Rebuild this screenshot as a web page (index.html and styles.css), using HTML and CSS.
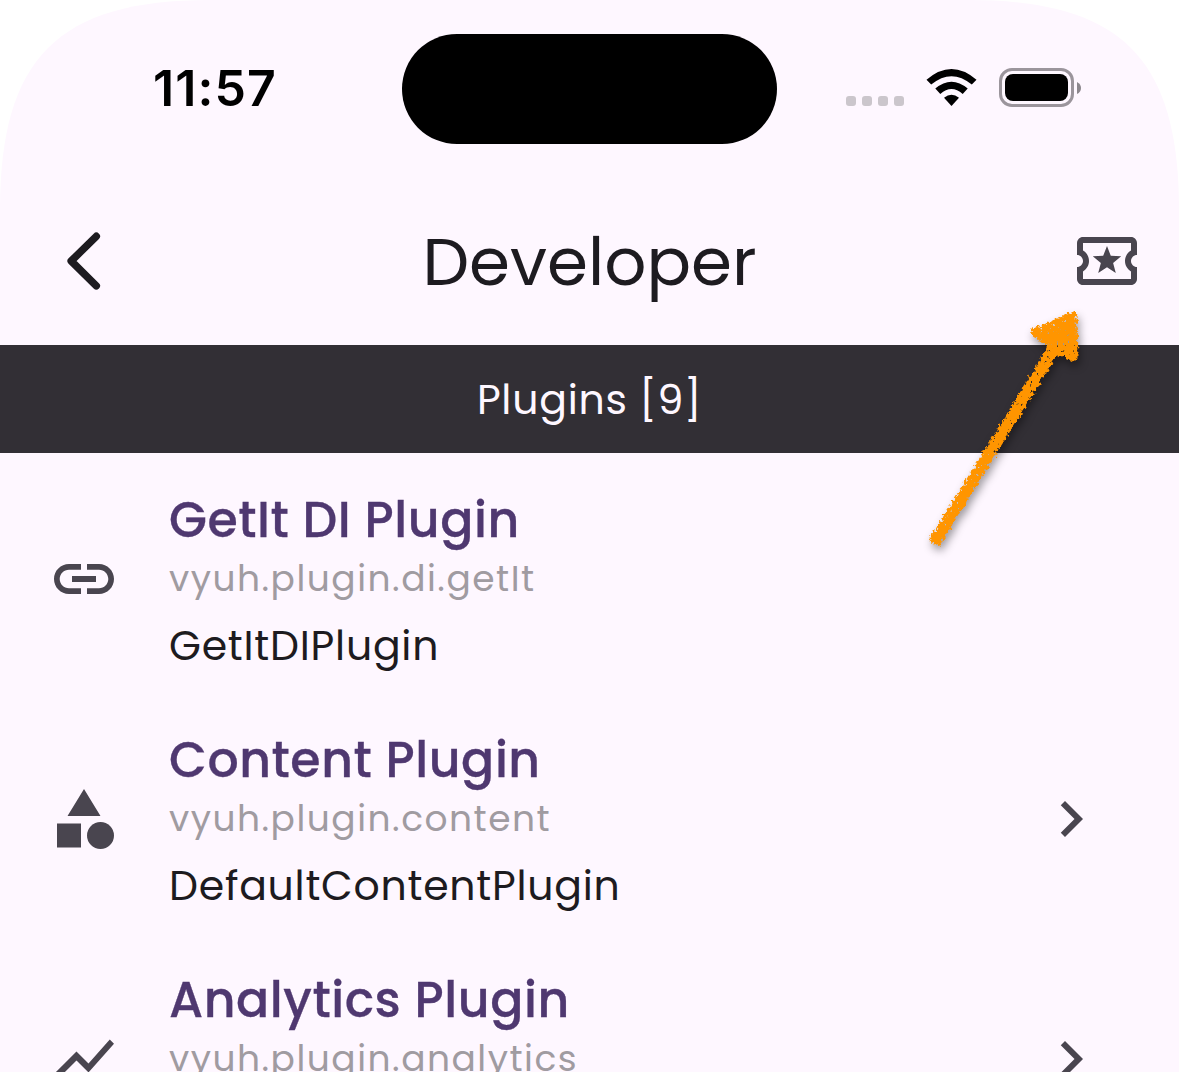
FILE: index.html
```
<!DOCTYPE html>
<html lang="en">
<head>
<meta charset="utf-8">
<title>Developer</title>
<link rel="stylesheet" href="styles.css">
</head>
<body>
<div class="screen">
  <header class="status-bar">
    <div class="status-left"><span class="time">11:57</span></div>
    <div class="island"></div>
    <div class="status-right">
      <div class="cell"><i></i><i></i><i></i><i></i></div>
      <svg class="wifi" viewBox="0 0 50 37">
        <path d="M0 10.8Q25 -10.8 50 10.8L45.3 15.6Q25 -1.2 4.7 15.6Z"/>
        <path d="M8.8 19.5Q25 5.8 41.2 19.5L36.2 24.9Q25 15.2 13.8 24.9Z"/>
        <path d="M17.5 28.7Q25 22.8 32.5 28.7L25 37Z"/>
      </svg>
      <div class="battery">
        <div class="battery-case"><div class="battery-fill"></div></div>
        <svg class="battery-tip" viewBox="0 0 4 12"><path d="M0 0Q4 2 4 6T0 12Z"/></svg>
      </div>
    </div>
  </header>
  <nav class="app-bar">
    <svg class="back" viewBox="0 0 40 60"><path d="M33.3 6.3L8.2 31L33.3 55.8"/></svg>
    <h1 class="title">Developer</h1>
    <svg class="icon action" viewBox="0 0 24 24"><path d="M22 10V6c0-1.11-.9-2-2-2H4c-1.1 0-1.99.89-1.99 2v4c1.1 0 1.99.9 1.99 2s-.89 2-2 2v4c0 1.1.9 2 2 2h16c1.1 0 2-.9 2-2v-4c-1.1 0-2-.9-2-2s.9-2 2-2zm-2-1.46c-1.19.69-2 1.99-2 3.46s.81 2.77 2 3.46V18H4v-2.54c1.19-.69 2-1.99 2-3.46 0-1.48-.8-2.77-1.99-3.46L4 6h16v2.54zM9.07 16L12 14.12 14.93 16l-.89-3.36 2.69-2.2-3.47-.21L12 7l-1.27 3.22-3.47.21 2.69 2.2z"/></svg>
  </nav>
  <h2 class="section">Plugins [9]</h2>
  <main class="list">
    <article class="item">
      <svg class="icon" viewBox="0 0 24 24"><path d="M3.9 12c0-1.71 1.39-3.1 3.1-3.1h4V7H7c-2.76 0-5 2.24-5 5s2.24 5 5 5h4v-1.9H7c-1.71 0-3.1-1.39-3.1-3.1zM8 13h8v-2H8v2zm9-6h-4v1.9h4c1.71 0 3.1 1.39 3.1 3.1s-1.39 3.1-3.1 3.1h-4V17h4c2.76 0 5-2.24 5-5s-2.24-5-5-5z"/></svg>
      <div class="body">
        <h3 class="name">GetIt DI Plugin</h3>
        <p class="id">vyuh.plugin.di.getIt</p>
        <p class="type">GetItDIPlugin</p>
      </div>
    </article>
    <article class="item">
      <svg class="icon" viewBox="0 0 24 24"><path d="M12 2l-5.5 9h11zM3 13.5h8v8H3z"/><circle cx="17.5" cy="17.5" r="4.5"/></svg>
      <div class="body">
        <h3 class="name">Content Plugin</h3>
        <p class="id">vyuh.plugin.content</p>
        <p class="type">DefaultContentPlugin</p>
      </div>
      <svg class="icon" viewBox="0 0 24 24"><path d="M10 6L8.59 7.41 13.17 12l-4.58 4.59L10 18l6-6z"/></svg>
    </article>
    <article class="item">
      <svg class="icon" viewBox="0 0 24 24"><path d="M3.5 18.49l6-6.01 4 4L22 6.92l-1.41-1.41-7.09 7.97-4-4L2 16.99z"/></svg>
      <div class="body">
        <h3 class="name">Analytics Plugin</h3>
        <p class="id">vyuh.plugin.analytics</p>
      </div>
      <svg class="icon" viewBox="0 0 24 24"><path d="M10 6L8.59 7.41 13.17 12l-4.58 4.59L10 18l6-6z"/></svg>
    </article>
  </main>
  <svg class="pointer" viewBox="0 0 200 270">
    <defs><filter id="crayon" x="-10%" y="-10%" width="120%" height="120%">
      <feTurbulence type="fractalNoise" baseFrequency="0.3" numOctaves="2" seed="4" result="n"/>
      <feDisplacementMap in="SourceGraphic" in2="n" scale="8" xChannelSelector="R" yChannelSelector="G" result="d"/>
      <feColorMatrix in="n" type="matrix" values="0 0 0 0 0  0 0 0 0 0  0 0 0 0 0  0 0 -10 0 7.9" result="m"/>
      <feComposite in="d" in2="m" operator="in" result="c"/>
      <feGaussianBlur in="c" stdDeviation="0.4"/>
    </filter></defs>
    <g filter="url(#crayon)"><path class="shaft" d="M24 253L147 54"/><path class="head" d="M124 42L163 25L164 68L148 60Z"/></g>
  </svg>
</div>
</body>
</html>
```
FILE: styles.css
```
* { box-sizing: border-box; margin: 0; padding: 0; }
body { background: #fff; font-family: Poppins, Inter, "Open Sans", sans-serif; overflow: hidden; }
.screen {
  width: 1179px; height: 1072px; overflow: hidden; background: #fef7ff; color: #1d1b20;
  clip-path: path("M0 1072V210C0 58 58 0 210 0H969C1121 0 1179 58 1179 210V1072Z");
}

/* Status bar */
.status-bar { display: grid; grid-template-columns: 402px 375px 402px; height: 178px; padding-top: 34px; }
.status-left { padding-left: 153px; }
.time { font-family: Inter, sans-serif; font-size: 50px; line-height: 108px; font-weight: 600; color: #000; letter-spacing: 1.1px; }
.island { height: 110px; border-radius: 55px; background: #000; }
.status-right { display: flex; align-items: flex-start; padding: 34px 0 0 69px; }
.cell { display: flex; gap: 6px; margin: 28px 22px 0 0; }
.cell i { width: 10px; height: 10px; border-radius: 3px; background: #cbc6cc; }
.wifi { width: 51px; height: 37px; margin: 1px 22px 0 0; }
.battery { display: flex; align-items: center; gap: 3px; }
.battery-case { width: 75px; height: 39px; padding: 3px; border: 3px solid #9b959c; border-radius: 13px; }
.battery-fill { height: 27px; border-radius: 8px; background: #000; }
.battery-tip { width: 4px; height: 12px; fill: #8c878d; }

/* App bar */
.app-bar { display: grid; grid-template-columns: 1fr auto 1fr; align-items: center; height: 167px; padding: 0 36px; }
.back { width: 40px; height: 60px; margin: 0 0 3px 27px; fill: none; stroke: #1d1b20; stroke-width: 7.5; stroke-linecap: round; stroke-linejoin: round; }
.title { font-size: 66px; line-height: 100px; font-weight: 400; }
.icon { flex: none; width: 72px; height: 72px; fill: #49454f; }
.action { justify-self: end; margin-bottom: 2px; }

/* Plugin list */
.section { height: 108px; background: #322f35; color: #fef7ff; text-align: center; font-size: 41px; line-height: 110px; font-weight: 400; letter-spacing: .75px; }
.list { padding-top: 6px; }
.item { display: flex; align-items: center; height: 240px; padding: 0 72px 0 48px; }
.body { flex: 1; height: 192px; padding: 5px 0 0 49px; }
.name { font-size: 49px; line-height: 65px; font-weight: 500; letter-spacing: .55px; color: #4f3870; -webkit-text-stroke: .3px #4f3870; }
.id { font-size: 36px; line-height: 52px; font-weight: 400; letter-spacing: 1.5px; color: #a09ba1; }
.type { font-size: 41px; line-height: 82px; font-weight: 400; letter-spacing: .75px; }

/* Hand-drawn arrow over the page */
.pointer { position: absolute; left: 910px; top: 290px; width: 200px; height: 270px; filter: drop-shadow(2px 5px 4px rgba(0,0,0,.4)); }
.shaft { fill: none; stroke: #ff9500; stroke-width: 12; }
.head { fill: #ff9500; stroke: #ff9500; stroke-width: 7; stroke-linejoin: round; }
```
